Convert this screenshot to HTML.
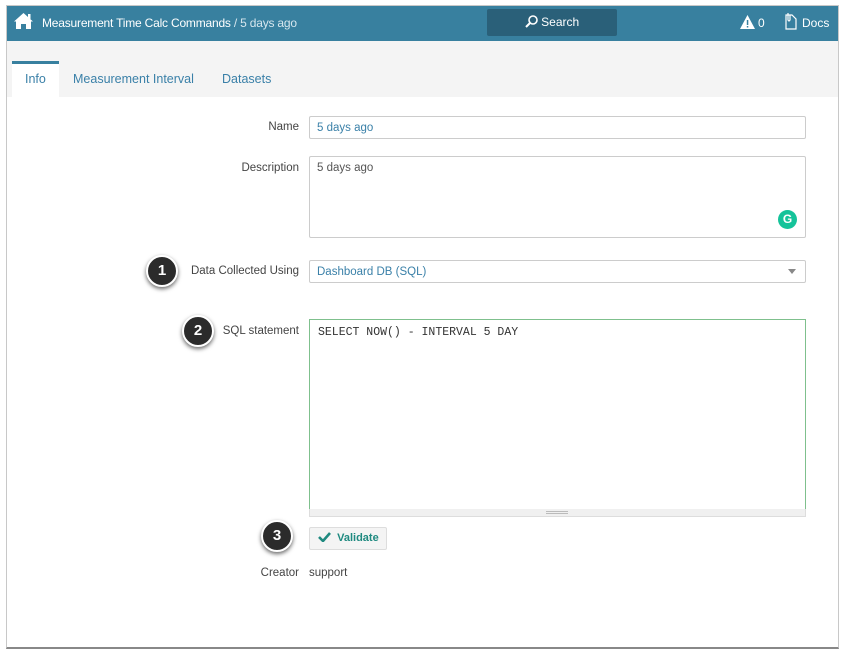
<!DOCTYPE html>
<html><head><style>
*{box-sizing:border-box;margin:0;padding:0}
body{width:845px;height:652px;background:#fff;font-family:"Liberation Sans",sans-serif;position:relative;overflow:hidden}
.abs{position:absolute}
.win{left:6px;top:5px;width:833px;height:644px;border:1px solid #c8c8c8;border-bottom:2px solid #888;}
.hdr{left:7px;top:6px;width:831px;height:35px;background:#38809f;color:#fff;font-size:12px}
.tabs{left:7px;top:41px;width:831px;height:56px;background:#f4f4f4}
.lbl{font-size:11.5px;color:#444;text-align:right;width:150px}
.inp{border:1px solid #ccc;border-radius:2px;background:#fff;font-size:11.5px;color:#3a80a8;padding:5px 7px}
.badge{width:32px;height:32px;border-radius:50%;background:#2b2b2b;border:2px solid #fff;box-shadow:0 2px 4px rgba(0,0,0,.6);color:#fff;font-weight:bold;font-size:15px;text-align:center;line-height:28px}
</style></head><body>
<div class="abs win"></div>
<div class="abs hdr">
 <svg class="abs" style="left:6px;top:6px" width="21" height="18" viewBox="0 0 21 18"><path d="M10.5 1 L1 9.5 L3 9.5 L3 17 L8 17 L8 12 L13 12 L13 17 L18 17 L18 9.5 L20 9.5 Z" fill="#fff"/><rect x="15" y="2" width="2.5" height="5" fill="#fff"/></svg>
 <div class="abs" style="left:35px;top:10px;letter-spacing:-0.2px">Measurement Time Calc Commands <span style="color:#d6e6ee">/ 5 days ago</span></div>
 <div class="abs" style="left:480px;top:3px;width:130px;height:27px;background:#2a6079;border-radius:2px;text-align:center;line-height:27px">
  <svg width="13" height="13" viewBox="0 0 13 13" style="vertical-align:-2px"><circle cx="8" cy="5" r="4" fill="none" stroke="#fff" stroke-width="1.6"/><path d="M5 8 L1 12" stroke="#fff" stroke-width="2"/></svg> Search</div>
 <svg class="abs" style="left:733px;top:9px" width="15" height="14" viewBox="0 0 15 14"><path d="M7.5 0 L15 14 L0 14Z" fill="#fff"/><rect x="6.8" y="5" width="1.5" height="5" fill="#38809f"/><rect x="6.8" y="11" width="1.5" height="1.5" fill="#38809f"/></svg>
 <div class="abs" style="left:751px;top:10px">0</div>
 <svg class="abs" style="left:777px;top:6px" width="13" height="18" viewBox="0 0 13 18"><path d="M2 3 L8 3 L12 7 L12 17 L2 17 Z M4 1 L4 8 Q5 10 6 8 L6 3" fill="none" stroke="#fff" stroke-width="1.2"/></svg>
 <div class="abs" style="left:795px;top:10px">Docs</div>
</div>
<div class="abs tabs">
 <div class="abs" style="left:5px;top:20px;width:47px;height:37px;background:#fff;border-top:3px solid #38809f"></div>
 <div class="abs" style="left:18px;top:31px;font-size:12.5px;color:#3a80a8">Info</div>
 <div class="abs" style="left:66px;top:31px;font-size:12.5px;color:#3a80a8">Measurement Interval</div>
 <div class="abs" style="left:215px;top:31px;font-size:12.5px;color:#3a80a8">Datasets</div>
</div>
<div class="abs lbl" style="left:149px;top:121px">Name</div>
<div class="abs inp" style="left:309px;top:116px;width:497px;height:23px">5 days ago</div>
<div class="abs lbl" style="left:149px;top:162px">Description</div>
<div class="abs inp" style="left:309px;top:156px;width:497px;height:82px;color:#555">5 days ago</div>
<div class="abs" style="left:778px;top:210px;width:19px;height:19px;border-radius:50%;background:#15c39a;color:#fff;font-size:12px;font-weight:bold;text-align:center;line-height:19px">G</div>
<div class="abs badge" style="left:146px;top:255px">1</div>
<div class="abs lbl" style="left:149px;top:265px">Data Collected Using</div>
<div class="abs inp" style="left:309px;top:260px;width:497px;height:23px">Dashboard DB (SQL)</div>
<div class="abs" style="left:788px;top:269px;border:4px solid transparent;border-top:5px solid #888"></div>
<div class="abs badge" style="left:182px;top:315px">2</div>
<div class="abs lbl" style="left:149px;top:325px">SQL statement</div>
<div class="abs" style="left:309px;top:319px;width:497px;height:191px;border:1px solid #7fc08d;font-family:'Liberation Mono',monospace;font-size:11.5px;color:#333;padding:6px 8px">SELECT NOW() - INTERVAL 5 DAY</div>
<div class="abs" style="left:309px;top:509px;width:497px;height:8px;background:#f0f0f0;border:1px solid #ddd;border-top:none"></div>
<div class="abs" style="left:546px;top:511px;width:22px;height:3px;border-top:1px solid #bbb;border-bottom:1px solid #bbb"></div>
<div class="abs badge" style="left:261px;top:520px">3</div>
<div class="abs" style="left:309px;top:527px;width:78px;height:23px;background:#f4f4f4;border:1px solid #ddd;border-radius:2px;color:#1f8a80;font-weight:bold;font-size:11px;line-height:21px;padding-left:8px">
 <svg width="13" height="10" viewBox="0 0 13 10" style="vertical-align:-1px"><path d="M1 5 L5 9 L12 1" fill="none" stroke="#1f8a80" stroke-width="2.6"/></svg>&nbsp; Validate</div>
<div class="abs lbl" style="left:149px;top:567px">Creator</div>
<div class="abs" style="left:309px;top:567px;font-size:11.5px;color:#444">support</div>
</body></html>
